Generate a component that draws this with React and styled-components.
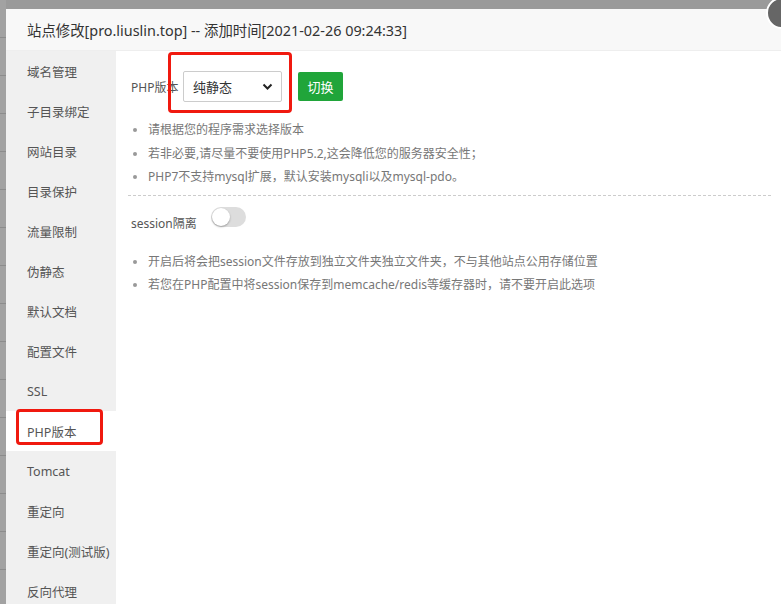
import React from 'react'
import styled, { createGlobalStyle } from 'styled-components'

const Global = createGlobalStyle`
  html, body {
    margin: 0;
    padding: 0;
    width: 781px;
    height: 604px;
    overflow: hidden;
    background: #9a9a9a;
    font-family: "Noto Sans", "Noto Sans CJK SC", sans-serif;
  }
`

const Screen = styled.div`
  position: relative;
  width: 781px;
  height: 604px;
  display: flex;
  padding: 9px 0 0 6px;
  box-sizing: border-box;
  overflow: hidden;
`

const Backdrop = styled.div`
  position: absolute;
  left: 0;
  top: 0;
  width: 6px;
  height: 604px;
  background: repeating-linear-gradient(
    to bottom,
    #a2a2a2 0,
    #a2a2a2 37px,
    #8c8c8c 37px,
    #8c8c8c 38px
  );
`

const Modal = styled.div`
  position: relative;
  flex: 1;
  display: flex;
  flex-direction: column;
  background: #fff;
`

const TitleBar = styled.div`
  height: 42px;
  flex-shrink: 0;
  display: flex;
  align-items: center;
  padding-left: 21px;
  background: #f8f8f8;
  border-bottom: 1px solid #eee;
  font-size: 14.4px;
  color: #333;
  box-sizing: border-box;
`

const Close = styled.div`
  position: absolute;
  top: -12px;
  right: -17px;
  width: 28px;
  height: 28px;
  border-radius: 50%;
  background: #666;
  border: 2px solid #fff;
`

const Body = styled.div`
  flex: 1;
  display: flex;
`

const Sidebar = styled.div`
  width: 110px;
  background: #f0f0f0;
  display: flex;
  flex-direction: column;
`

const NavItem = styled.div`
  position: relative;
  height: 40px;
  flex-shrink: 0;
  display: flex;
  align-items: center;
  padding-left: 21px;
  font-size: 12.5px;
  color: #555;
  background: ${p => (p.$active ? '#fff' : 'transparent')};
`

const Mark = styled.div`
  position: absolute;
  border: 3px solid #f0190f;
  border-radius: 4px;
  box-sizing: border-box;
`

const Content = styled.div`
  flex: 1;
  padding: 20px 10px 0 15px;
`

const Row = styled.div`
  display: flex;
  align-items: center;
  font-size: 12px;
  color: #555;
`

const Label = styled.span`
  width: 52px;
`

const SelectWrap = styled.div`
  position: relative;
  width: 99px;
  height: 31px;
  box-sizing: border-box;
  border: 1px solid #ccc;
  border-radius: 2px;
  display: flex;
  align-items: center;
  justify-content: space-between;
  padding: 0 8px 0 9px;
  font-size: 13px;
  color: #333;
`

const Button = styled.div`
  margin-left: 16px;
  width: 45px;
  height: 29px;
  background: #20a53a;
  border-radius: 2px;
  color: #fff;
  font-size: 13px;
  display: flex;
  align-items: center;
  justify-content: center;
`

const Tips = styled.ul`
  margin: ${p => p.$top}px 0 0 0;
  padding: 0 0 0 17px;
  list-style: none;
`

const Tip = styled.li`
  position: relative;
  font-size: 12px;
  color: #777;
  line-height: 23.5px;
  &::before {
    content: '';
    position: absolute;
    left: -15px;
    top: 10px;
    width: 4px;
    height: 4px;
    border-radius: 50%;
    background: #999;
  }
`

const Divider = styled.div`
  margin: 6px 0 0 -3px;
  border-top: 1px dashed #ccc;
`

const SessionRow = styled(Row)`
  margin-top: 11px;
  align-items: flex-start;
`

const SessionLabel = styled.span`
  margin-top: 7px;
`

const Switch = styled.div`
  margin-left: 14px;
  width: 35px;
  height: 20px;
  border-radius: 10px;
  background: #ddd;
  position: relative;
  &::after {
    content: '';
    position: absolute;
    left: 1px;
    top: 1px;
    width: 18px;
    height: 18px;
    border-radius: 50%;
    background: #fff;
    box-shadow: 0 1px 2px rgba(0, 0, 0, 0.3);
  }
`

const nav = [
  '域名管理', '子目录绑定', '网站目录', '目录保护', '流量限制', '伪静态', '默认文档',
  '配置文件', 'SSL', 'PHP版本', 'Tomcat', '重定向', '重定向(测试版)', '反向代理'
]

export default function App() {
  return (
    <Screen>
      <Global />
      <Backdrop />
      <Modal>
        <TitleBar>站点修改[pro.liuslin.top] -- 添加时间[2021-02-26 09:24:33]</TitleBar>
        <Close />
        <Body>
          <Sidebar>
            {nav.map(n => (
              <NavItem key={n} $active={n === 'PHP版本'}>
                {n}
                {n === 'PHP版本' && <Mark style={{ left: 10, top: -2, width: 87, height: 36 }} />}
              </NavItem>
            ))}
          </Sidebar>
          <Content>
            <Row>
              <Label>PHP版本</Label>
              <SelectWrap>
                纯静态
                <svg width="11" height="8" viewBox="0 0 11 8">
                  <path d="M1.5 1.5 L5.5 5.5 L9.5 1.5" fill="none" stroke="#222" strokeWidth="2" />
                </svg>
                <Mark style={{ left: -16, top: -20, width: 124, height: 61 }} />
              </SelectWrap>
              <Button>切换</Button>
            </Row>
            <Tips $top={16}>
              <Tip>请根据您的程序需求选择版本</Tip>
              <Tip>若非必要,请尽量不要使用PHP5.2,这会降低您的服务器安全性；</Tip>
              <Tip>PHP7不支持mysql扩展，默认安装mysqli以及mysql-pdo。</Tip>
            </Tips>
            <Divider />
            <SessionRow>
              <SessionLabel>session隔离</SessionLabel>
              <Switch />
            </SessionRow>
            <Tips $top={18}>
              <Tip>开启后将会把session文件存放到独立文件夹独立文件夹，不与其他站点公用存储位置</Tip>
              <Tip>若您在PHP配置中将session保存到memcache/redis等缓存器时，请不要开启此选项</Tip>
            </Tips>
          </Content>
        </Body>
      </Modal>
    </Screen>
  )
}
